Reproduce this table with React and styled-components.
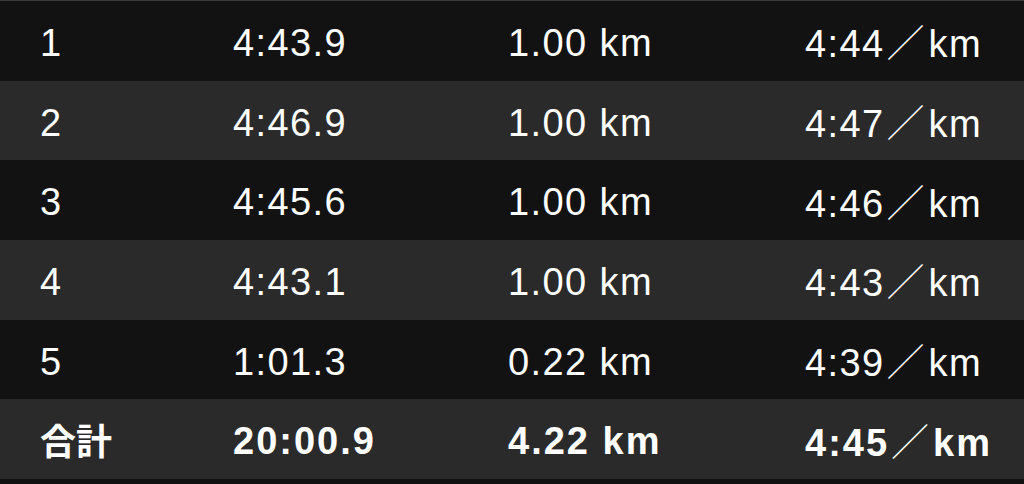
import React from "react";
import styled, { createGlobalStyle } from "styled-components";

const GlobalStyle = createGlobalStyle`
  html, body {
    margin: 0;
    padding: 0;
    background: #111111;
  }
  body {
    font-family: "Liberation Sans", "Noto Sans CJK JP", sans-serif;
    color: #ffffff;
  }
`;

const splits = [
  { lap: "1", time: "4:43.9", dist: "1.00 km", pace: "4:44" },
  { lap: "2", time: "4:46.9", dist: "1.00 km", pace: "4:47" },
  { lap: "3", time: "4:45.6", dist: "1.00 km", pace: "4:46" },
  { lap: "4", time: "4:43.1", dist: "1.00 km", pace: "4:43" },
  { lap: "5", time: "1:01.3", dist: "0.22 km", pace: "4:39" },
];

const total = { lap: "合計", time: "20:00.9", dist: "4.22 km", pace: "4:45" };

const Table = styled.div`
  width: 1024px;
  height: 484px;
  background: #111111;
  border-top: 1px solid #3a3a3a;
  box-sizing: border-box;
  display: flex;
  flex-direction: column;
  overflow: hidden;
`;

const Row = styled.div`
  display: grid;
  grid-template-columns: 193px 275px 297px 1fr;
  align-items: center;
  height: 79.7px;
  flex: none;
  padding: 4px 0 0 40px;
  box-sizing: border-box;
  background: ${(p) => (p.$alt ? "#2a2a2a" : "#121212")};
  font-size: 38px;
  font-weight: ${(p) => (p.$total ? 700 : 400)};
  letter-spacing: ${(p) => (p.$total ? "2px" : "1.4px")};
  white-space: nowrap;
`;

const Cell = styled.span`
  line-height: 1;
`;

const Slash = styled.span`
  font-family: "Noto Sans CJK JP", sans-serif;
  font-weight: 300;
  letter-spacing: 0;
  margin: 0 4px 0 2px;
`;

const Label = styled.span`
  font-family: "Noto Sans CJK JP", sans-serif;
  font-size: 36px;
  letter-spacing: 0;
`;

const SplitRow = ({ split, alt, isTotal }) => (
  <Row $alt={alt} $total={isTotal}>
    <Cell>{isTotal ? <Label>{split.lap}</Label> : split.lap}</Cell>
    <Cell>{split.time}</Cell>
    <Cell>{split.dist}</Cell>
    <Cell>
      {split.pace}
      <Slash>／</Slash>km
    </Cell>
  </Row>
);

export default function App() {
  return (
    <>
      <GlobalStyle />
      <Table>
        {splits.map((s, i) => (
          <SplitRow key={s.lap} split={s} alt={i % 2 === 1} />
        ))}
        <SplitRow split={total} alt isTotal />
      </Table>
    </>
  );
}
